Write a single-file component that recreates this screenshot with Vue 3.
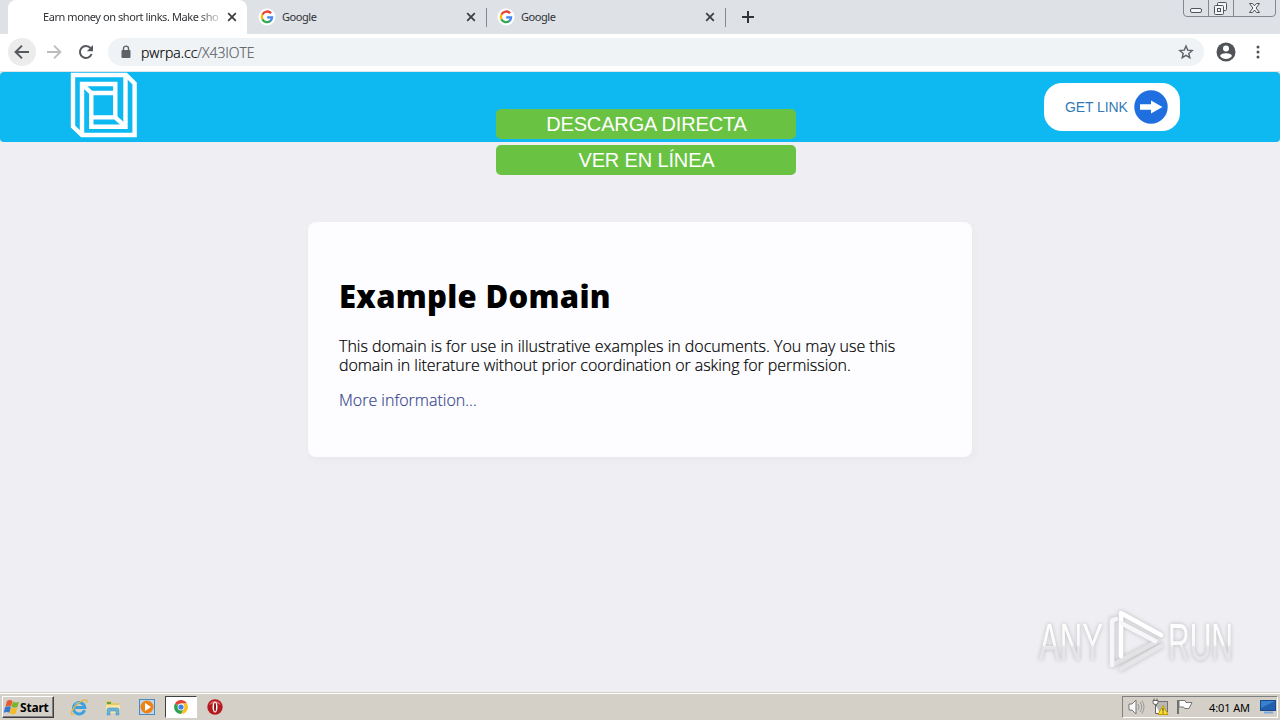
<template>
  <div class="screen">
    <div class="tabstrip">
      <div v-for="(tab, i) in tabs" :key="i" class="tab" :class="{ active: tab.active, divided: !tab.active }">
        <span class="favicon">
          <svg v-if="!tab.active" width="18" height="18" viewBox="0 0 18 18">
            <circle cx="9" cy="9" r="8.5" fill="#fff" />
            <g fill="none" stroke-width="2.3">
              <path d="M13.1 5.3A5.2 5.2 0 0 0 4.4 6.6" stroke="#ea4335" />
              <path d="M4.5 6.5a5.2 5.2 0 0 0 0 5" stroke="#fbbc05" />
              <path d="M4.4 11.4a5.2 5.2 0 0 0 8 1.5" stroke="#34a853" />
              <path d="M12.2 13.1A5.2 5.2 0 0 0 14.1 9.3H9.2" stroke="#4285f4" />
            </g>
          </svg>
        </span>
        <span class="tab-title" :class="{ long: tab.active }">{{ tab.title }}</span>
        <svg class="close" width="10" height="10" viewBox="0 0 10 10">
          <path d="M1.2 1.2l7.6 7.6M8.8 1.2L1.2 8.8" stroke="#3c4043" stroke-width="1.8" />
        </svg>
      </div>
      <svg class="new-tab" width="14" height="14" viewBox="0 0 14 14">
        <path d="M7 1v12M1 7h12" stroke="#303338" stroke-width="2" />
      </svg>
      <div class="window-controls">
        <svg width="97" height="17" viewBox="0 0 97 17">
          <path d="M.5 0v13q0 3.500 3.500 3.500H89q3.500 0 3.500-3.500V0M25.500 0v16M50.500 0v16" fill="none" stroke="#84888e" />
          <g fill="#f4f5f7" stroke="#50545b">
            <rect x="7.500" y="8.500" width="11" height="4" rx="1.500" />
            <rect x="34.500" y="2.500" width="9" height="8" rx="1" />
            <rect x="31.500" y="5.500" width="9" height="9" rx="1" />
            <rect x="34.500" y="8.500" width="3" height="3" />
            <path d="M66.500 3.500h3l2 2.300 2-2.300h3l-3.400 4.500 3.400 4.500h-3l-2-2.500-2 2.500h-3l3.400-4.500z" />
          </g>
        </svg>
      </div>
    </div>

    <div class="toolbar">
      <span class="back">
        <svg width="16" height="16" viewBox="0 0 16 16">
          <path d="M15 8H2M8 1.600L1.600 8 8 14.400" fill="none" stroke="#55585c" stroke-width="2" />
        </svg>
      </span>
      <svg class="forward" width="16" height="16" viewBox="0 0 16 16">
        <path d="M1 8h13M8 1.600L14.400 8 8 14.400" fill="none" stroke="#babcbe" stroke-width="1.800" />
      </svg>
      <svg class="reload" width="16" height="16" viewBox="0 0 16 16">
        <path d="M13.600 10A6 6 0 1 1 12.600 4.200" fill="none" stroke="#55585c" stroke-width="2" />
        <path d="M15 1v6.200H8.800z" fill="#55585c" />
      </svg>
      <div class="omnibox">
        <svg width="10" height="14" viewBox="0 0 10 14">
          <path d="M2.500 6V3.600a2.500 2.500 0 0 1 5 0V6" fill="none" stroke="#5f6368" stroke-width="1.400" />
          <rect x=".5" y="5" width="9" height="8" rx="1" fill="#5f6368" />
        </svg>
        <span class="url">pwrpa.cc<em>/X43lOTE</em></span>
        <svg class="star" width="16" height="16" viewBox="0 0 16 16">
          <path d="M8 2l1.700 4.100 4.500.4-3.400 2.900 1 4.300L8 11.400l-3.800 2.300 1-4.300-3.400-2.900 4.500-.4z" fill="none" stroke="#5f6368" stroke-width="1.400" />
        </svg>
      </div>
      <svg class="avatar" width="20" height="20" viewBox="0 0 20 20">
        <circle cx="10" cy="10" r="9.500" fill="#505357" />
        <circle cx="10" cy="6.500" r="3" fill="#fff" />
        <path d="M4 14q.8-2.800 6-2.800t6 2.800q-2.200 3-6 3t-6-3z" fill="#fff" />
      </svg>
      <svg class="menu" width="4" height="16" viewBox="0 0 4 16" fill="#505357">
        <circle cx="2" cy="3" r="1.500" /><circle cx="2" cy="8" r="1.500" /><circle cx="2" cy="13" r="1.500" />
      </svg>
    </div>

    <main class="page">
      <header class="site-header">
        <svg class="logo" width="68" height="66" viewBox="0 0 68 66" fill="none" stroke="#fff" stroke-width="4.4">
          <path d="M3 3h53l8.600 8.500V63H12L3 54.500z" />
          <path d="M55.500 3v51.700H21.300V21H45" />
          <path d="M12 63V12h33.300v35M12 12l9.300 9" />
          <path d="M21.300 45.400h24l10.200 9.300" />
        </svg>
        <a class="get-link">
          <span>GET LINK</span>
          <svg width="34" height="34" viewBox="0 0 34 34">
            <circle cx="17" cy="17" r="16.700" fill="#1f6fe0" />
            <path d="M6 14.300h11V10.500L28.500 17 17 23.500v-3.800H6z" fill="#fff" />
          </svg>
        </a>
      </header>
      <div class="downloads">
        <button>DESCARGA DIRECTA</button>
        <button>VER EN LÍNEA</button>
      </div>
      <section class="card">
        <h1>Example Domain</h1>
        <p>
          <span class="line">This domain is for use in illustrative examples in documents. You may use this</span>
          <span class="line tight">domain in literature without prior coordination or asking for permission.</span>
        </p>
        <p><a>More information...</a></p>
      </section>
      <div class="watermark">
        <svg width="204" height="70" viewBox="0 0 204 70">
          <defs>
            <linearGradient id="fade" x1="0" y1="0" x2="0" y2="1">
              <stop offset="0" stop-color="#fff" />
              <stop offset=".55" stop-color="#fafafb" />
              <stop offset=".6" stop-color="#e5e5e8" />
              <stop offset="1" stop-color="#e8e8eb" />
            </linearGradient>
          </defs>
          <g fill="url(#fade)" class="mark-text">
            <text x="5" y="53.5" textLength="64" lengthAdjust="spacingAndGlyphs">ANY</text>
            <text x="134" y="53.5" textLength="65" lengthAdjust="spacingAndGlyphs">RUN</text>
          </g>
          <g fill="none" stroke-linejoin="round" stroke-linecap="round" stroke-width="4.500">
            <path d="M78 13v46l46-24" stroke="#e2e2e5" />
            <path d="M82 13l-4 2v44" stroke="#f6f6f8" />
            <path d="M87 50V7l40 22" stroke="#fff" />
            <path d="M87 17l34 18" stroke="#f7f7f9" />
            <path d="M87 63l40-23" stroke="#e6e6e9" />
          </g>
        </svg>
      </div>
    </main>

    <footer class="taskbar">
      <div class="start">
        <svg width="17" height="17" viewBox="0 0 17 17">
          <path d="M4 2q3-2 5.500 0L8 7.500q-2.500-1.600-5.500 0z" fill="#e8592b" />
          <path d="M10 2.500q2.600 1.700 6 .2L14.500 8q-3 1.500-6-.2z" fill="#7cb52d" />
          <path d="M2.200 8q3-1.700 5.700 0l-1.500 5.800q-2.500-1.600-5.700 0z" fill="#3578ce" />
          <path d="M8.300 8.500q2.600 1.700 6 .2l-1.600 5.800q-3 1.500-6-.2z" fill="#f6bb24" />
        </svg>
        <b>Start</b>
      </div>
      <div class="launchers">
        <span class="launcher">
          <svg width="18" height="18" viewBox="0 0 18 18">
            <path d="M14.500 12.300A5.700 5.700 0 1 1 14.800 9.500H5" fill="none" stroke="#3da0df" stroke-width="3" />
            <path d="M4.500 6.500Q6.500 4.300 9 4.500" fill="none" stroke="#8fd2f5" />
            <path d="M3.500 16.200C-1 18 2 10 8.500 5.200 13 1.700 18.200.1 16.600 4.700" fill="none" stroke="#e5b83e" stroke-width="1.400" />
          </svg>
        </span>
        <span class="launcher">
          <svg width="18" height="18" viewBox="0 0 18 18">
            <path d="M2 3h5l1 2h7v10H2z" fill="#e8c765" />
            <path d="M3 4h4v2H3z" fill="#58a84d" />
            <path d="M2 7h14v8H2z" fill="#f7e7a4" />
            <path d="M3 17v-5q0-2 2-2h8q2 0 2 2v5h-3v-4H6v4z" fill="#66b4df" stroke="#4389b9" stroke-width=".5" />
          </svg>
        </span>
        <span class="launcher">
          <svg width="18" height="18" viewBox="0 0 18 18">
            <rect x="1.500" y="1.500" width="15" height="15" fill="#b9d9f1" stroke="#4c89bf" />
            <circle cx="9" cy="9" r="6.500" fill="#ee8214" />
            <path d="M7 5l6 4-6 4z" fill="#fff" />
          </svg>
        </span>
        <span class="launcher pressed">
          <svg width="14" height="14" viewBox="0 0 14 14">
            <path d="M7 7L1 3.500A7 7 0 0 1 13 3.500H7z" fill="#e34133" />
            <path d="M7 7l3 1.800L7 14A7 7 0 0 1 1 3.500z" fill="#34a052" />
            <path d="M7 7V3.500h6A7 7 0 0 1 7 14l3-5.300z" fill="#fbc116" />
            <circle cx="7" cy="7" r="3.400" fill="#fff" /><circle cx="7" cy="7" r="2.600" fill="#3f7fe8" />
          </svg>
        </span>
        <span class="launcher">
          <svg width="16" height="16" viewBox="0 0 16 16">
            <circle cx="8" cy="8" r="7.700" fill="#b5191f" />
            <path d="M2 6a6.500 6.500 0 0 1 12 0q-6-3-12 0z" fill="#d9605d" />
            <ellipse cx="8" cy="8" rx="2.500" ry="5.500" fill="#fff" /><ellipse cx="8" cy="8" rx="1" ry="4.500" fill="#8d1015" />
          </svg>
        </span>
      </div>
      <div class="tray">
        <svg width="18" height="18" viewBox="0 0 18 18">
          <path d="M2 6h3l4-4v14l-4-4H2z" fill="#fafafa" stroke="#77777a" />
          <path d="M11 6q2 3 0 6M13 4q3.500 5 0 10M15 2.500q4 6.500 0 13" fill="none" stroke="#99999a" />
        </svg>
        <svg width="18" height="18" viewBox="0 0 18 18">
          <rect x="5.500" y="3.500" width="11" height="10" fill="#b8b7b3" stroke="#747476" />
          <path d="M2 2.500v2q0 2 2.500 2t2.500-2v-2zM3 .5v2M6 .5v2M4.500 6.500V15.500H9" fill="#fff" stroke="#626264" />
          <path d="M12 7.500l5 9H7z" fill="#ffe02e" stroke="#c09c00" /><path d="M12 10v3.500M12 14.300v1.200" stroke="#333" />
        </svg>
        <svg width="18" height="18" viewBox="0 0 18 18">
          <path d="M3 2v14" stroke="#717173" stroke-width="2" />
          <path d="M4 2.500h6l1 2h6l-3 6H9.500l-1-1.500H4z" fill="#fdfdfd" stroke="#777779" />
        </svg>
        <time>4:01 AM</time>
        <svg class="desktop" width="16" height="14" viewBox="0 0 16 14">
          <rect x=".5" y=".5" width="15" height="10" fill="#215fae" stroke="#174a8b" />
          <path d="M1 1h14L1 8z" fill="#3880cf" /><path d="M4 12.500h9" stroke="#7ba9dc" stroke-width="2" />
        </svg>
      </div>
    </footer>
  </div>
</template>

<script setup>
const tabs = [
  { title: "Earn money on short links. Make sho", active: true },
  { title: "Google", active: false },
  { title: "Google", active: false },
];
</script>

<style>
body {
  overflow: hidden;
}
</style>

<style scoped>
.screen {
  width: 1280px;
  height: 720px;
  display: flex;
  flex-direction: column;
  font-family: "Noto Sans", sans-serif;
  background: #efeff3;
}
svg {
  display: block;
  flex: none;
}

/* browser chrome */
.tabstrip {
  height: 34px;
  display: flex;
  align-items: stretch;
  background: #dee1e6;
  padding-left: 8px;
}
.tab {
  width: 239px;
  box-sizing: border-box;
  display: flex;
  align-items: center;
  padding: 0 10px 0 11px;
  position: relative;
}
.tab.active {
  background: #fff;
  border-radius: 8px 8px 0 0;
}
.tab.divided::after {
  content: "";
  position: absolute;
  right: -1px;
  top: 8px;
  height: 19px;
  width: 1px;
  background: #85888e;
}
.favicon {
  width: 18px;
  height: 18px;
  margin-right: 6px;
}
.tab-title {
  width: 178px;
  overflow: hidden;
  white-space: nowrap;
  font-size: 11px;
  line-height: 18px;
  letter-spacing: -0.43px;
  color: #303336;
}
.tab-title.long {
  mask-image: linear-gradient(to right, #000 155px, transparent 182px);
}
.close {
  margin-left: auto;
}
.new-tab {
  margin: 10px 0 0 16px;
}
.window-controls {
  margin-left: auto;
}
.toolbar {
  height: 37px;
  box-sizing: content-box;
  display: flex;
  align-items: center;
  background: #fff;
  border-bottom: 1px solid #e3e6e8;
}
.toolbar > * {
  margin-bottom: 1px;
}
.back {
  width: 28px;
  height: 28px;
  margin-left: 8px;
  border-radius: 50%;
  background: #ececed;
  display: grid;
  place-items: center;
}
.forward {
  margin-left: 10px;
}
.reload {
  margin-left: 16px;
}
.omnibox {
  width: 1096px;
  height: 28px;
  box-sizing: border-box;
  margin-left: 14px;
  padding: 0 10px 0 13px;
  border-radius: 14px;
  background: #eff3f6;
  display: flex;
  align-items: center;
}
.url {
  margin-left: 10px;
  font: 300 14px "Open Sans", "Noto Sans", sans-serif;
  -webkit-text-stroke: 0.2px;
  color: #000;
}
.url em {
  font-style: normal;
  color: #55595e;
}
.star {
  margin-left: auto;
}
.avatar {
  margin-left: 12px;
}
.menu {
  margin-left: 20px;
}

/* web page */
.page {
  flex: 1;
  position: relative;
}
.site-header {
  height: 70px;
  box-sizing: border-box;
  padding: 0 100px 0 70px;
  border-radius: 4px;
  background: #0db9f0;
  display: flex;
  justify-content: space-between;
  align-items: center;
}
.logo {
  margin-bottom: 4px;
}
.get-link {
  width: 136px;
  height: 48px;
  box-sizing: border-box;
  padding: 0 12px 0 21px;
  border-radius: 18px;
  background: #fff;
  display: flex;
  align-items: center;
  justify-content: space-between;
  font: 14px "Liberation Sans", sans-serif;
  letter-spacing: -0.1px;
  color: #337ab7;
}
.downloads {
  position: absolute;
  left: 496px;
  top: 37px;
  display: grid;
  gap: 6px;
}
.downloads button {
  width: 300px;
  height: 30px;
  padding: 0 0 0 1px;
  border: 0;
  border-radius: 5px;
  background: #69c242;
  color: #fff;
  font: 20px/30px "Liberation Sans", sans-serif;
  letter-spacing: -0.15px;
}
.card {
  width: 664px;
  height: 235px;
  box-sizing: border-box;
  margin: 80px auto 0;
  padding: 52px 31px 0;
  border-radius: 8px;
  background: #fdfdff;
  box-shadow: 2px 3px 7px 2px rgba(0, 0, 0, 0.02);
}
.card h1 {
  margin: 0 0 19px;
  font: 800 31px/44px "Open Sans", "Noto Sans", sans-serif;
  letter-spacing: 0.3px;
  color: #000;
}
.card p {
  margin: 0 0 16px;
  font: 300 16px/19px "Open Sans", "Noto Sans", sans-serif;
  -webkit-text-stroke: 0.2px;
  color: #000;
  white-space: nowrap;
}
.line {
  display: block;
}
.line.tight {
  letter-spacing: -0.06px;
}
.card a {
  color: #38488f;
}
.watermark {
  position: absolute;
  left: 1034px;
  top: 534px;
  filter: drop-shadow(0 0 2px rgba(0, 0, 0, 0.22));
}
.mark-text {
  font: 52px "Liberation Sans", sans-serif;
}

/* desktop taskbar */
.taskbar {
  height: 28px;
  box-sizing: border-box;
  border-top: 1px solid #d4d0c8;
  box-shadow: inset 0 1px #fff;
  background: #d4d0c8;
  padding: 3px 2px 2px;
  display: flex;
  align-items: center;
}
.start {
  width: 52px;
  height: 22px;
  box-sizing: border-box;
  border: 1px solid;
  border-color: #fff #404040 #404040 #fff;
  box-shadow: inset -1px -1px #808080;
  display: flex;
  align-items: center;
}
.start b {
  font-size: 12px;
  letter-spacing: -0.2px;
}
.launchers {
  display: flex;
  margin-left: 9px;
  gap: 2px;
}
.launcher {
  width: 32px;
  height: 22px;
  box-sizing: border-box;
  display: grid;
  place-items: center;
}
.launcher.pressed {
  border: 1px solid;
  border-color: #404040 #fff #fff #404040;
  background: #fff;
}
.tray {
  width: 156px;
  height: 22px;
  box-sizing: border-box;
  margin-left: auto;
  padding: 0 1px 0 4px;
  border: 1px solid;
  border-color: #808080 #fff #fff #808080;
  display: flex;
  align-items: center;
  gap: 6px;
}
.tray time {
  width: 43px;
  margin-left: 10px;
  font-size: 11px;
  letter-spacing: -0.1px;
  white-space: nowrap;
}
.desktop {
  margin-left: auto;
}
</style>
